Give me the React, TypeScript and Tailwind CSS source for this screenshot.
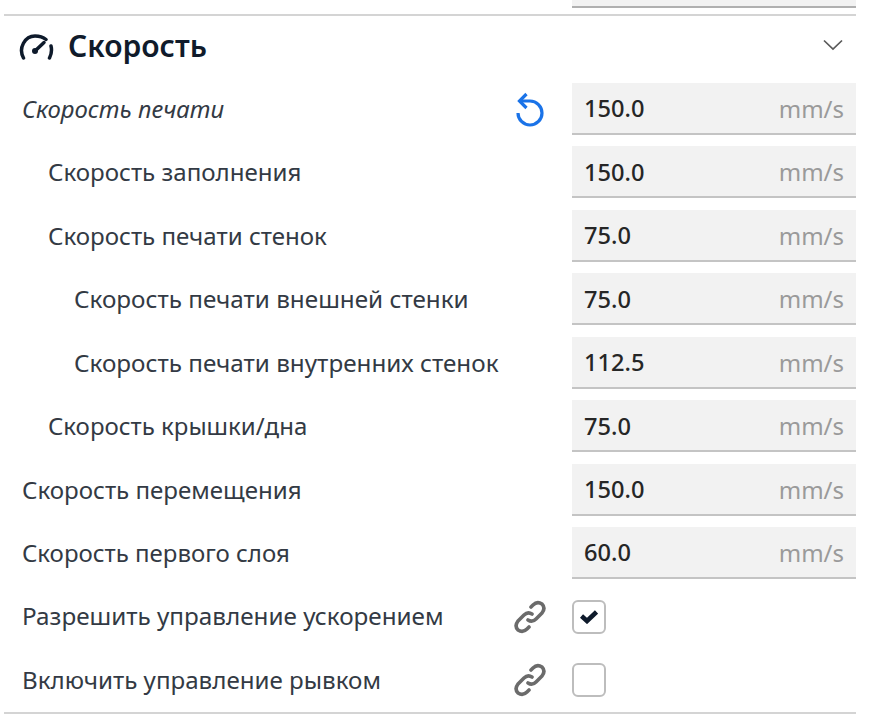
import React from "react";

const rows: { label: string; value: string; pad: string; size: string; italic?: boolean; reset?: boolean }[] = [
  { label: "Скорость печати", value: "150.0", pad: "pl-0", size: "text-[23.9px]", italic: true, reset: true },
  { label: "Скорость заполнения", value: "150.0", pad: "pl-[26px]", size: "text-[24.1px]" },
  { label: "Скорость печати стенок", value: "75.0", pad: "pl-[26px]", size: "text-[24.1px]" },
  { label: "Скорость печати внешней стенки", value: "75.0", pad: "pl-[52px]", size: "text-[24.25px]" },
  { label: "Скорость печати внутренних стенок", value: "112.5", pad: "pl-[52px]", size: "text-[24.25px]" },
  { label: "Скорость крышки/дна", value: "75.0", pad: "pl-[26px]", size: "text-[24px]" },
  { label: "Скорость перемещения", value: "150.0", pad: "pl-0", size: "text-[24.1px]" },
  { label: "Скорость первого слоя", value: "60.0", pad: "pl-0", size: "text-[24px]" },
];

function LinkIcon() {
  return (
    <svg width="34" height="34" viewBox="0 0 34 34" fill="none" stroke="#6b6b6b" strokeWidth="3.600" strokeLinecap="round" strokeLinejoin="round">
      <path d="M15 20 C18 22 21 21 23 19 L29 13 C32 9 31 6 29 4 C26 2 23 2 20 5 L18 7" />
      <path d="M19 14 C16 12 13 13 11 15 L5 21 C2 25 3 28 5 30 C8 32 11 32 14 29 L16 27" />
    </svg>
  );
}

export default function App() {
  return (
    <div className="w-[870px] h-[721px] bg-white overflow-hidden text-[#1f2530] font-['Noto_Sans','Open_Sans',sans-serif]">
      <div className="ml-[572px] w-[284px] h-[8px] bg-[#f2f2f2] border-b-2 border-[#b0b0b0]" />
      <div className="ml-[4px] w-[852px] mt-[6px] border-t-2 border-[#d4d4d4]" />
      <div className="flex items-center h-[60px] pl-[18px] pr-[26px]">
        <svg width="36" height="30" viewBox="0 0 36 30" fill="none" stroke="#0e1a2b" strokeWidth="3.500" strokeLinecap="round">
          <path d="M5.500 27 C0 17 7 5 17 5 C21 5 25 6 28 8.500" />
          <path d="M31.500 27 C33.500 23 34 19 33 15" />
          <path d="M17 20 L26 11.500" />
          <circle cx="17" cy="20" r="3" fill="#0e1a2b" stroke="none" />
        </svg>
        <span className="ml-[14px] text-[30px] font-semibold text-[#101b2b] leading-none">Скорость</span>
        <svg className="ml-auto -translate-y-[1px]" width="22" height="14" viewBox="0 0 22 14" fill="none" stroke="#5a5a5a" strokeWidth="1.700">
          <path d="M2 2.500 L11 11 L20 2.500" />
        </svg>
      </div>
      <div className="mt-[7px] pl-[22px] pr-[14px]">
        {rows.map((r) => (
          <div key={r.label} className="flex items-center h-[51.6px] mb-[11.9px]">
            <div className={`flex-1 -translate-y-[0.5px] text-[#333a44] ${r.pad} ${r.size}`}>
              <span className={r.italic ? "italic" : ""}>{r.label}</span>
            </div>
            {r.reset && (
              <svg className="mr-[28px]" width="32" height="36" viewBox="0 0 32 36" fill="none" stroke="#1a73e8" strokeWidth="3.200">
                <path d="M9 10 H18 A12 12 0 1 1 6 22" />
                <path d="M14.500 3 L7.500 10 L14.500 17" />
              </svg>
            )}
            <div className="w-[284px] h-full flex items-center justify-between px-[12px] bg-[#f2f2f2] border-b-2 border-[#c4c4c4]">
              <span className="text-[23.6px] font-medium text-[#262626] translate-y-[1px]">{r.value}</span>
              <span className="text-[24px] text-[#9a9a9a] translate-y-[0.5px]">mm/s</span>
            </div>
          </div>
        ))}
        {[true, false].map((c) => (
          <div key={String(c)} className="flex items-center h-[51.6px] mb-[11.9px]">
            <div className={c ? "flex-1 text-[24.25px] text-[#333a44]" : "flex-1 text-[24.15px] text-[#333a44]"}>
              {c ? "Разрешить управление ускорением" : "Включить управление рывком"}
            </div>
            <div className="mr-[25px]"><LinkIcon /></div>
            <div className="w-[284px]">
              <div className="w-[34px] h-[34px] rounded-[6px] border-2 border-[#bdbdbd] flex items-center justify-center">
                {c && (
                  <svg width="18" height="15" viewBox="0 0 18 15" fill="none" stroke="#0e1a2b" strokeWidth="4.600">
                    <path d="M1.500 7 L7 12 L16.500 3" />
                  </svg>
                )}
              </div>
            </div>
          </div>
        ))}
      </div>
      <div className="ml-[4px] w-[852px] -mt-[6px] border-t-2 border-[#d4d4d4]" />
    </div>
  );
}
